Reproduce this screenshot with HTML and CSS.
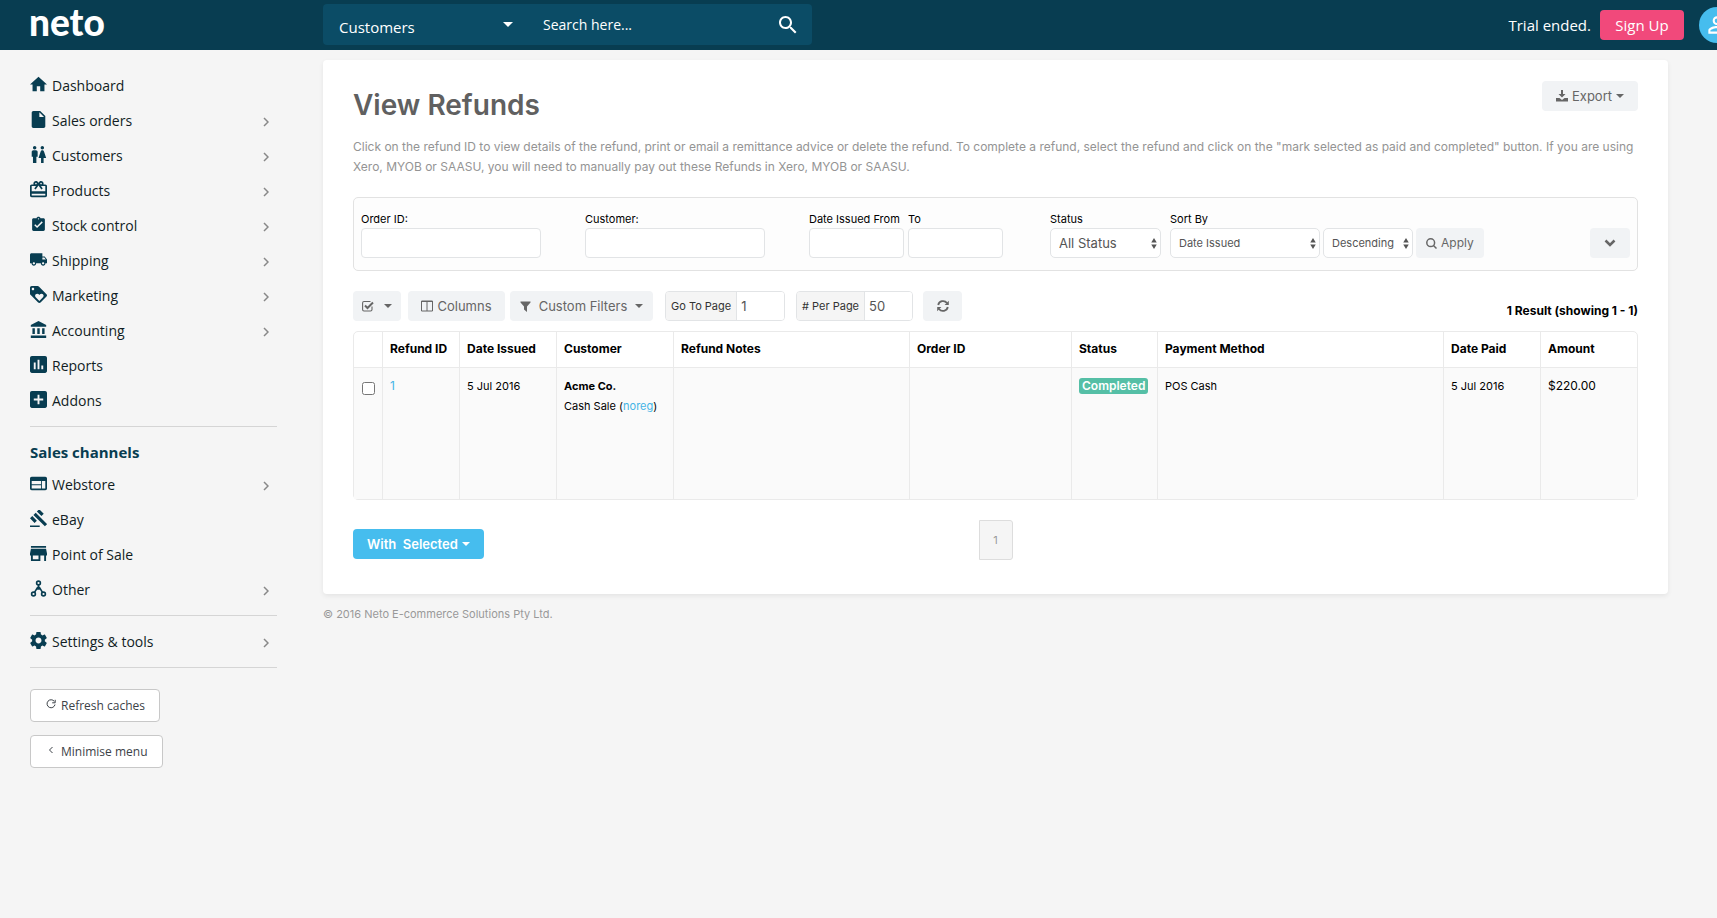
FILE: index.html
```html
<!DOCTYPE html>
<html lang="en">
<head>
<meta charset="utf-8">
<meta name="viewport" content="width=device-width, initial-scale=1">
<title>View Refunds</title>
<link rel="stylesheet" href="styles.css">
</head>
<body>
<svg class="sprite" aria-hidden="true">
  <symbol id="home" viewBox="2 2 20 20"><path d="M10 20v-6h4v6h5v-8h3L12 3 2 12h3v8z"/></symbol>
  <symbol id="file" viewBox="2 2 20 20"><path d="M6 2c-1.100 0-1.990.9-1.990 2L4 20c0 1.100.89 2 1.990 2H18c1.100 0 2-.9 2-2V8l-6-6H6zm7 7V3.500L18.500 9H13z"/></symbol>
  <symbol id="people" viewBox="2 2 20 20"><path d="M5.500 22v-7.500H4V9c0-1.100.9-2 2-2h3c1.100 0 2 .9 2 2v5.500H9.500V22h-4zM18 22v-6h3l-2.540-7.630C18.180 7.550 17.420 7 16.560 7h-.12c-.86 0-1.630.55-1.900 1.370L12 16h3v6h3zM7.500 6c1.110 0 2-.89 2-2s-.89-2-2-2-2 .89-2 2 .89 2 2 2zm9 0c1.110 0 2-.89 2-2s-.89-2-2-2-2 .89-2 2 .89 2 2 2z"/></symbol>
  <symbol id="gift" viewBox="2 2 20 20"><path d="M20 6h-2.180c.11-.31.18-.65.18-1 0-1.660-1.340-3-3-3-1.050 0-1.960.54-2.500 1.350l-.5.67-.5-.68C10.960 2.540 10.050 2 9 2 7.340 2 6 3.340 6 5c0 .35.07.69.18 1H4c-1.110 0-1.990.89-1.990 2L2 19c0 1.110.89 2 2 2h16c1.110 0 2-.89 2-2V8c0-1.110-.89-2-2-2zm-5-2c.55 0 1 .45 1 1s-.45 1-1 1-1-.45-1-1 .45-1 1-1zM9 4c.55 0 1 .45 1 1s-.45 1-1 1-1-.45-1-1 .45-1 1-1zm11 15H4v-2h16v2zm0-5H4V8h5.080L7 10.830 8.620 12 11 8.760l1-1.360 1 1.360L15.380 12 17 10.830 14.920 8H20v6z"/></symbol>
  <symbol id="clip" viewBox="0 0 24 24"><path d="M19 3h-4.180C14.400 1.840 13.300 1 12 1c-1.300 0-2.400.84-2.820 2H5c-1.100 0-2 .9-2 2v14c0 1.100.9 2 2 2h14c1.100 0 2-.9 2-2V5c0-1.100-.9-2-2-2zm-7 0c.55 0 1 .45 1 1s-.45 1-1 1-1-.45-1-1 .45-1 1-1zm-2 14l-4-4 1.410-1.410L10 14.170l6.590-6.590L18 9l-8 8z"/></symbol>
  <symbol id="truck" viewBox="1 1 22 22"><path d="M20 8h-3V4H3c-1.100 0-2 .9-2 2v11h2c0 1.660 1.340 3 3 3s3-1.340 3-3h6c0 1.660 1.340 3 3 3s3-1.340 3-3h2v-5l-3-4zM6 18.500c-.83 0-1.500-.67-1.500-1.500s.67-1.500 1.500-1.500 1.500.67 1.500 1.500-.67 1.500-1.500 1.500zm13.500-9l1.960 2.500H17V9.500h2.500zm-1.500 9c-.83 0-1.500-.67-1.500-1.500s.67-1.500 1.500-1.500 1.500.67 1.500 1.500-.67 1.500-1.500 1.500z"/></symbol>
  <symbol id="tag" viewBox="2 2 20 20"><path d="M21.410 11.580l-9-9C12.050 2.220 11.550 2 11 2H4c-1.100 0-2 .9-2 2v7c0 .55.22 1.050.59 1.420l9 9c.36.36.86.58 1.410.58.55 0 1.050-.22 1.410-.59l7-7c.37-.36.59-.86.59-1.410 0-.55-.23-1.060-.59-1.420zM5.500 7C4.670 7 4 6.330 4 5.500S4.670 4 5.500 4 7 4.670 7 5.500 6.330 7 5.500 7zm11.770 8.270L13 19.540l-4.270-4.270C8.280 14.810 8 14.190 8 13.500c0-1.380 1.120-2.500 2.500-2.500.69 0 1.320.28 1.770.74l.73.72.73-.73c.45-.45 1.080-.73 1.770-.73 1.380 0 2.500 1.120 2.500 2.500 0 .69-.28 1.320-.73 1.770z"/></symbol>
  <symbol id="bank" viewBox="1 1 21 21"><path d="M4 10v7h3v-7H4zm6 0v7h3v-7h-3zM2 22h19v-3H2v3zm14-12v7h3v-7h-3zm-4.500-9L2 6v2h19V6l-9.500-5z"/></symbol>
  <symbol id="chart" viewBox="3 3 18 18"><path d="M19 3H5c-1.100 0-2 .9-2 2v14c0 1.100.9 2 2 2h14c1.100 0 2-.9 2-2V5c0-1.100-.9-2-2-2zM9 17H7v-7h2v7zm4 0h-2V7h2v10zm4 0h-2v-4h2v4z"/></symbol>
  <symbol id="plus" viewBox="3 3 18 18"><path d="M19 3H5c-1.110 0-2 .9-2 2v14c0 1.100.89 2 2 2h14c1.100 0 2-.9 2-2V5c0-1.100-.9-2-2-2zm-2 10h-4v4h-2v-4H7v-2h4V7h2v4h4v2z"/></symbol>
  <symbol id="web" viewBox="2 2 20 20"><path d="M20 4H4c-1.100 0-1.990.9-1.990 2L2 18c0 1.100.9 2 2 2h16c1.100 0 2-.9 2-2V6c0-1.100-.9-2-2-2zm-5 14H4v-4h11v4zm0-5H4V9h11v4zm5 5h-4V9h4v9z"/></symbol>
  <symbol id="gavel" viewBox="1 2 21 21"><path d="M1 21h12v2H1zM5.245 8.070l2.830-2.827 14.140 14.142-2.828 2.828zM12.317 1l5.657 5.656-2.830 2.830-5.654-5.660zM3.825 9.485l5.657 5.657-2.828 2.828-5.657-5.657z"/></symbol>
  <symbol id="store" viewBox="3 3 18 18"><path d="M20 4H4v2h16V4zm1 10v-2l-1-5H4l-1 5v2h1v6h10v-6h4v6h2v-6h1zm-9 4H6v-4h6v4z"/></symbol>
  <symbol id="nodes" viewBox="0 0 17 17"><g fill="none" stroke="currentColor" stroke-width="1.600"><circle cx="8.500" cy="3" r="1.900"/><circle cx="3.500" cy="14" r="1.900"/><circle cx="13.500" cy="14" r="1.900"/><path d="M8.500 5v3.500M4.500 12.300l3-4.800h2l3 4.800M6.500 9h4"/></g></symbol>
  <symbol id="cog" viewBox="2 2 20 20"><path d="M19.430 12.980c.04-.32.07-.64.07-.98s-.03-.66-.07-.98l2.110-1.650c.19-.15.24-.42.12-.64l-2-3.460c-.12-.22-.39-.3-.61-.22l-2.490 1c-.52-.4-1.080-.73-1.690-.98l-.38-2.650C14.460 2.180 14.250 2 14 2h-4c-.25 0-.46.18-.49.42l-.38 2.650c-.61.25-1.170.59-1.690.98l-2.490-1c-.23-.09-.49 0-.61.22l-2 3.460c-.13.22-.07.49.12.64l2.110 1.650c-.04.32-.07.65-.07.98s.03.66.07.98l-2.110 1.650c-.19.15-.24.42-.12.64l2 3.460c.12.22.39.3.61.22l2.490-1c.52.4 1.080.73 1.690.98l.38 2.650c.03.24.24.42.49.42h4c.25 0 .46-.18.49-.42l.38-2.650c.61-.25 1.170-.59 1.690-.98l2.490 1c.23.09.49 0 .61-.22l2-3.460c.12-.22.07-.49-.12-.64l-2.110-1.650zM12 15.500c-1.930 0-3.500-1.570-3.500-3.500s1.570-3.500 3.500-3.500 3.500 1.570 3.500 3.500-1.570 3.500-3.500 3.500z"/></symbol>
  <symbol id="chev" viewBox="0 0 6 10"><path d="M1 1l4 4-4 4" fill="none" stroke="currentColor" stroke-width="1.500"/></symbol>
  <symbol id="caret" viewBox="0 0 8 4"><path d="M0 0h8L4 4z"/></symbol>
  <symbol id="updown" viewBox="0 0 6 12"><path d="M0 5l3-5 3 5zM0 7h6l-3 5z"/></symbol>
</svg>

<header class="topbar">
  <a class="logo" href="#">neto</a>
  <form class="search">
    <label class="search-scope">
      <select aria-label="Search in"><option>Customers</option></select>
      <svg class="caret-lg"><use href="#caret"/></svg>
    </label>
    <input class="search-text" type="text" placeholder="Search here..." aria-label="Search">
    <button class="search-go" type="button" aria-label="Search">
      <svg viewBox="3 3 18 18"><path d="M15.500 14h-.79l-.28-.27C15.410 12.590 16 11.110 16 9.500 16 5.910 13.090 3 9.500 3S3 5.910 3 9.500 5.910 16 9.500 16c1.610 0 3.090-.59 4.230-1.570l.27.28v.79l5 4.990L20.490 19l-4.990-5zm-6 0C7.010 14 5 11.990 5 9.500S7.010 5 9.500 5 14 7.010 14 9.500 11.990 14 9.500 14z"/></svg>
    </button>
  </form>
  <div class="account">
    <span>Trial ended.</span>
    <a class="signup" href="#">Sign Up</a>
    <button class="avatar" type="button" aria-label="Account">
      <svg viewBox="0 0 24 24"><path d="M12 5.900a2.100 2.100 0 1 1 0 4.200 2.100 2.100 0 0 1 0-4.200m0 9c2.970 0 6.100 1.460 6.100 2.100v1.100H5.900V17c0-.64 3.130-2.100 6.100-2.100M12 4C9.790 4 8 5.790 8 8s1.790 4 4 4 4-1.790 4-4-1.790-4-4-4zm0 9c-2.670 0-8 1.340-8 4v3h16v-3c0-2.660-5.330-4-8-4z"/></svg>
    </button>
  </div>
</header>

<div class="shell">
  <nav class="sidebar">
    <ul class="menu">
      <li><a href="#"><svg><use href="#home"/></svg>Dashboard</a></li>
      <li><a href="#"><svg><use href="#file"/></svg>Sales orders<svg class="chev"><use href="#chev"/></svg></a></li>
      <li><a href="#"><svg><use href="#people"/></svg>Customers<svg class="chev"><use href="#chev"/></svg></a></li>
      <li><a href="#"><svg><use href="#gift"/></svg>Products<svg class="chev"><use href="#chev"/></svg></a></li>
      <li><a href="#"><svg><use href="#clip"/></svg>Stock control<svg class="chev"><use href="#chev"/></svg></a></li>
      <li><a href="#"><svg><use href="#truck"/></svg>Shipping<svg class="chev"><use href="#chev"/></svg></a></li>
      <li><a href="#"><svg><use href="#tag"/></svg>Marketing<svg class="chev"><use href="#chev"/></svg></a></li>
      <li><a href="#"><svg><use href="#bank"/></svg>Accounting<svg class="chev"><use href="#chev"/></svg></a></li>
      <li><a href="#"><svg><use href="#chart"/></svg>Reports</a></li>
      <li><a href="#"><svg><use href="#plus"/></svg>Addons</a></li>
    </ul>
    <h2>Sales channels</h2>
    <ul class="menu">
      <li><a href="#"><svg><use href="#web"/></svg>Webstore<svg class="chev"><use href="#chev"/></svg></a></li>
      <li><a href="#"><svg><use href="#gavel"/></svg>eBay</a></li>
      <li><a href="#"><svg><use href="#store"/></svg>Point of Sale</a></li>
      <li><a href="#"><svg><use href="#nodes"/></svg>Other<svg class="chev"><use href="#chev"/></svg></a></li>
    </ul>
    <ul class="menu menu-tools">
      <li><a href="#"><svg><use href="#cog"/></svg>Settings &amp; tools<svg class="chev"><use href="#chev"/></svg></a></li>
    </ul>
    <div class="side-actions">
      <button type="button"><svg viewBox="0 0 10 10"><path d="M8.300 2.400A4 4 0 1 0 9 5.500M9.200.8v3H6.200" fill="none" stroke="currentColor"/></svg>Refresh caches</button>
      <button type="button"><svg viewBox="0 0 10 10"><path d="M6.500 2l-3 3 3 3" fill="none" stroke="currentColor"/></svg>Minimise menu</button>
    </div>
  </nav>

  <main class="main">
    <section class="card">
      <div class="card-head">
        <h1>View Refunds</h1>
        <button class="btn" type="button"><svg class="i12" viewBox="0 0 12 12"><path d="M5 0h2v4h2.500L6 7.500 2.500 4H5zM0 8h3.500L6 10l2.500-2H12v3.500H0z"/></svg>Export<svg class="caret"><use href="#caret"/></svg></button>
      </div>
      <p class="intro">Click on the refund ID to view details of the refund, print or email a remittance advice or delete the refund. To complete a refund, select the refund and click on the "mark selected as paid and completed" button. If you are using Xero, MYOB or SAASU, you will need to manually pay out these Refunds in Xero, MYOB or SAASU.</p>

      <form class="filters">
        <div class="field"><label for="oid">Order ID:</label><input id="oid" type="text"></div>
        <div class="field"><label for="cust">Customer:</label><input id="cust" type="text"></div>
        <div class="dates">
          <div class="field"><label for="from">Date Issued From</label><input id="from" type="text"></div>
          <div class="field"><label for="to">To</label><input id="to" type="text"></div>
        </div>
        <div class="sorting">
          <div class="field status"><label for="st">Status</label><span class="pick"><select id="st"><option>All Status</option></select><svg><use href="#updown"/></svg></span></div>
          <div class="field sort"><label for="sort">Sort By</label><span class="pick"><select id="sort"><option>Date Issued</option></select><svg><use href="#updown"/></svg></span></div>
          <span class="pick dir"><select aria-label="Sort direction"><option>Descending</option></select><svg><use href="#updown"/></svg></span>
          <button class="btn apply" type="button"><svg class="i11" viewBox="0 0 11 11"><g fill="none" stroke="currentColor" stroke-width="1.500"><circle cx="4.700" cy="4.700" r="3.900"/><path d="M7.500 7.500l3 3"/></g></svg>Apply</button>
        </div>
        <button class="btn more" type="button" aria-label="More filters"><svg class="i12" viewBox="0 0 12 12"><path d="M1.500 3.500L6 8l4.500-4.500" fill="none" stroke="currentColor" stroke-width="2.500"/></svg></button>
      </form>

      <div class="tools">
        <button class="btn check" type="button" aria-label="Select"><svg class="i12" viewBox="0 0 12 12"><path d="M10 6.500v3a1.500 1.500 0 0 1-1.500 1.500H2A1.500 1.500 0 0 1 .6 9.500V3A1.500 1.500 0 0 1 2 1.500h6.500" fill="none" stroke="currentColor" stroke-width="1.100"/><path d="M3 5.500L5.500 8 11 2.500" fill="none" stroke="currentColor" stroke-width="2"/></svg><svg class="caret"><use href="#caret"/></svg></button>
        <button class="btn cols" type="button"><svg class="i12" viewBox="0 0 12 12"><path d="M.5 1h11v10H.5zM6 1v10M.5 1.500h11" fill="none" stroke="currentColor"/></svg>Columns</button>
        <button class="btn custom" type="button"><svg class="i11" viewBox="0 0 11 11"><path d="M.5.500h10v1L7 5.500V11L4 8.500v-3L.5 1.500z"/></svg>Custom Filters<svg class="caret"><use href="#caret"/></svg></button>
        <div class="group page"><label for="pg">Go To Page</label><input id="pg" type="text" value="1"></div>
        <div class="group per"><label for="per"># Per Page</label><input id="per" type="text" value="50"></div>
        <button class="btn reload" type="button" aria-label="Refresh"><svg class="i12" viewBox="0 0 12 12"><path d="M1.200 5A5 5 0 0 1 10 3M10.800 7A5 5 0 0 1 2 9" fill="none" stroke="currentColor" stroke-width="1.800"/><path d="M11.800.8V5H7.600zM.2 11.200V7h4.200z"/></svg></button>
        <strong class="result">1 Result (showing 1 - 1)</strong>
      </div>

      <table class="grid">
        <colgroup><col class="c-check"><col class="c-id"><col class="c-date"><col class="c-cust"><col class="c-notes"><col class="c-order"><col class="c-status"><col><col class="c-date"><col class="c-amount"></colgroup>
        <thead><tr><th></th><th>Refund ID</th><th>Date Issued</th><th>Customer</th><th>Refund Notes</th><th>Order ID</th><th>Status</th><th>Payment Method</th><th>Date Paid</th><th>Amount</th></tr></thead>
        <tbody><tr>
          <td class="tick"><input type="checkbox" aria-label="Select refund 1"></td>
          <td class="num"><a href="#">1</a></td>
          <td>5 Jul 2016</td>
          <td><b>Acme Co.</b><br>Cash Sale (<a href="#">noreg</a>)</td>
          <td></td><td></td>
          <td><span class="badge">Completed</span></td>
          <td>POS Cash</td><td>5 Jul 2016</td><td class="num">$220.00</td>
        </tr></tbody>
      </table>

      <div class="card-foot">
        <button class="btn primary" type="button">With&nbsp; Selected<svg class="caret"><use href="#caret"/></svg></button>
        <a class="pager" href="#">1</a>
      </div>
    </section>
    <footer>© 2016 Neto E-commerce Solutions Pty Ltd.</footer>
  </main>
</div>
</body>
</html>
```
FILE: styles.css
```css
* { box-sizing: border-box; }
body {
  margin: 0;
  min-height: 100vh;
  background: #f5f5f5;
  color: #000;
  font: 12px/20px Inter, "Liberation Sans", sans-serif;
  overflow-x: hidden;
}
a { color: #45b5e6; text-decoration: none; }
svg { fill: currentColor; flex: none; }
input, select, button { font: inherit; color: inherit; margin: 0; }
button { cursor: pointer; }
select { appearance: none; }
h1, h2, p, ul { margin: 0; padding: 0; }
.sprite { display: none; }

/* top bar */
.topbar {
  display: flex;
  align-items: center;
  height: 50px;
  padding-left: 29px;
  background: #083d51;
  color: #fff;
  font: 15px/20px "Open Sans", "Noto Sans", sans-serif;
}
.logo { width: 294px; color: #fff; font: 900 37px/44px Lato, sans-serif; padding-bottom: 6px; }
.search {
  display: flex;
  width: 489px;
  height: 41px;
  margin-bottom: 1px;
  border-radius: 4px;
  background: #0b4c66;
}
.search-scope { display: grid; align-items: center; width: 204px; }
.search-scope select, .search-scope svg { grid-area: 1 / 1; }
.search-scope select { height: 41px; padding: 5px 16px 0; border: 0; background: none; }
.caret-lg { width: 10px; height: 5px; justify-self: end; margin-right: 14px; }
.search-text { flex: 1; min-width: 0; padding: 0 16px; border: 0; background: none; font-size: 14px; }
.search-text::placeholder { color: #fff; opacity: 1; }
.search-go { display: flex; align-items: center; border: 0; padding: 0 15px; background: none; }
.search-go svg { width: 18px; height: 18px; }
.account { display: flex; align-items: center; margin: 0 -18px 0 auto; }
.signup { width: 84px; margin: 0 15px 0 9px; border-radius: 4px; background: #f1497b; color: #fff; line-height: 30px; text-align: center; }
.avatar { display: flex; align-items: center; justify-content: center; width: 36px; height: 36px; padding: 0; border: 0; border-radius: 50%; background: #46bdee; color: #fff; }
.avatar svg { width: 26px; height: 26px; }

/* side menu */
.shell { display: flex; }
.sidebar { flex: none; width: 277px; padding: 18px 0 30px 30px; font: 14px/20px "Open Sans", "Noto Sans", sans-serif; }
.menu { list-style: none; padding-bottom: 8px; border-bottom: 1px solid #d5d5d5; }
.menu a { display: flex; align-items: center; gap: 5px; height: 35px; color: #111d24; }
.menu svg { width: 17px; height: 17px; margin-bottom: 2px; color: #083d51; }
.menu .chev { width: 6px; height: 10px; margin: 2px 8px 0 auto; color: #888; }
.menu-tools { padding: 8px 0; }
.sidebar h2 { padding: 15px 0 5px; color: #083d51; font-size: 15px; line-height: 20px; font-weight: 700; }
.side-actions { display: flex; flex-direction: column; align-items: flex-start; gap: 13px; margin-top: 21px; }
.side-actions button { display: flex; align-items: center; gap: 5px; height: 33px; padding: 0 14px 0 15px; border: 1px solid #c8c8c8; border-radius: 4px; background: #fff; color: #3c4248; font-size: 12px; }
.side-actions svg { width: 10px; height: 10px; margin-bottom: 3px; }

/* content card */
.main { flex: 1; min-width: 0; padding: 10px 49px 0 46px; }
.card { padding: 21px 30px 34px; border-radius: 4px; background: #fff; box-shadow: 0 2px 5px rgba(0, 0, 0, .07); }
.card-head { display: flex; justify-content: space-between; align-items: flex-start; }
h1 { padding-top: 4px; color: #606060; font-size: 28px; line-height: 40px; font-weight: 600; }
.btn { display: flex; align-items: center; justify-content: center; gap: 4px; height: 30px; padding: 0 14px; border: 0; border-radius: 4px; background: #f1f3f5; color: #666; font-size: 13px; white-space: nowrap; }
.i12 { width: 12px; height: 12px; }
.i11 { width: 11px; height: 11px; }
.caret { width: 8px; height: 4px; }
.intro { margin: 12px 0 20px; color: #949494; line-height: 20px; }

.filters { display: flex; align-items: flex-end; height: 74px; padding: 0 7px 12px; border: 1px solid #e2e2e2; border-radius: 5px; background: #fdfdfd; }
.field { width: 180px; margin-right: 44px; }
.field label { display: block; line-height: 18px; font-size: 11px; white-space: nowrap; }
.field input { display: block; width: 100%; height: 30px; border: 1px solid #e2e4e6; border-radius: 4px; background: #fff; }
.dates { display: flex; gap: 4px; margin-right: 47px; }
.dates .field { width: 95px; margin: 0; }
.sorting { display: flex; align-items: flex-end; gap: 3px; }
.sorting .field { margin: 0; }
.sorting .status { width: 111px; margin-right: 6px; font-size: 13px; }
.sorting .sort { width: 150px; }
.pick { display: grid; align-items: center; height: 30px; color: #555; font-size: 11px; }
.status .pick { font-size: 13px; }
.pick select, .pick svg { grid-area: 1 / 1; }
.pick select { height: 30px; padding: 0 8px; border: 1px solid #e2e4e6; border-radius: 5px; background: #fff; }
.pick svg { width: 6px; height: 11px; justify-self: end; margin-right: 4px; }
.dir { width: 90px; }
.apply { padding: 0 10px; font-size: 12px; }
.more { width: 40px; margin-left: auto; }

.tools { display: flex; align-items: center; height: 30px; margin: 20px 0 10px; }
.check { width: 48px; gap: 10px; margin-right: 7px; padding: 0; }
.cols { width: 97px; margin-right: 5px; padding: 0; }
.custom { width: 143px; gap: 8px; margin-right: 12px; padding: 0; }
.group { display: flex; height: 30px; border: 1px solid #e2e4e6; border-radius: 4px; overflow: hidden; }
.group label { padding: 0 5px; border-right: 1px solid #e2e4e6; background: #f5f5f5; color: #333; font-size: 11px; line-height: 28px; white-space: nowrap; }
.group input { flex: 1; min-width: 0; padding: 0 4px; border: 0; background: #fff; color: #555; font-size: 13px; }
.page { width: 120px; margin-right: 11px; }
.per { width: 117px; margin-right: 10px; }
.reload { width: 39px; }
.result { margin: 9px 0 0 auto; font-weight: 700; }

.grid { width: 100%; border: 1px solid #eaeaea; border-radius: 5px; border-spacing: 0; table-layout: fixed; }
.grid th, .grid td { padding: 0 7px; text-align: left; border-left: 1px solid #eaeaea; }
.grid th:first-child, .grid td:first-child { border-left: 0; }
.grid th { height: 36px; padding-bottom: 2px; font-weight: 700; border-bottom: 1px solid #eaeaea; white-space: nowrap; }
.grid td { height: 131px; padding-top: 8px; background: #fafafa; font-size: 11px; vertical-align: top; }
.grid .num { font-size: 12px; }
.grid .tick input { display: block; width: 13px; height: 13px; margin: 6px 0 0 1px; }
.c-check { width: 28px; } .c-id { width: 77px; } .c-date { width: 97px; } .c-cust { width: 117px; }
.c-notes { width: 236px; } .c-order { width: 162px; } .c-status { width: 86px; } .c-amount { width: 97px; }
.badge { display: inline-block; padding: 0 3px; border-radius: 3px; background: #55bfa6; color: #fff; font-size: 12px; line-height: 16px; font-weight: 600; }

.card-foot { display: grid; grid-template-columns: 1fr auto 1fr; align-items: start; margin-top: 20px; }
.primary { justify-self: start; margin-top: 9px; background: #46bdee; color: #fff; font-weight: 600; }
.pager { width: 34px; border: 1px solid #ddd; background: #f5f5f5; color: #999; font-size: 11px; line-height: 38px; text-align: center; border-radius: 0 3px 3px 0; }
footer { margin-top: 10px; color: #999; font-size: 11px; line-height: 20px; }
```
